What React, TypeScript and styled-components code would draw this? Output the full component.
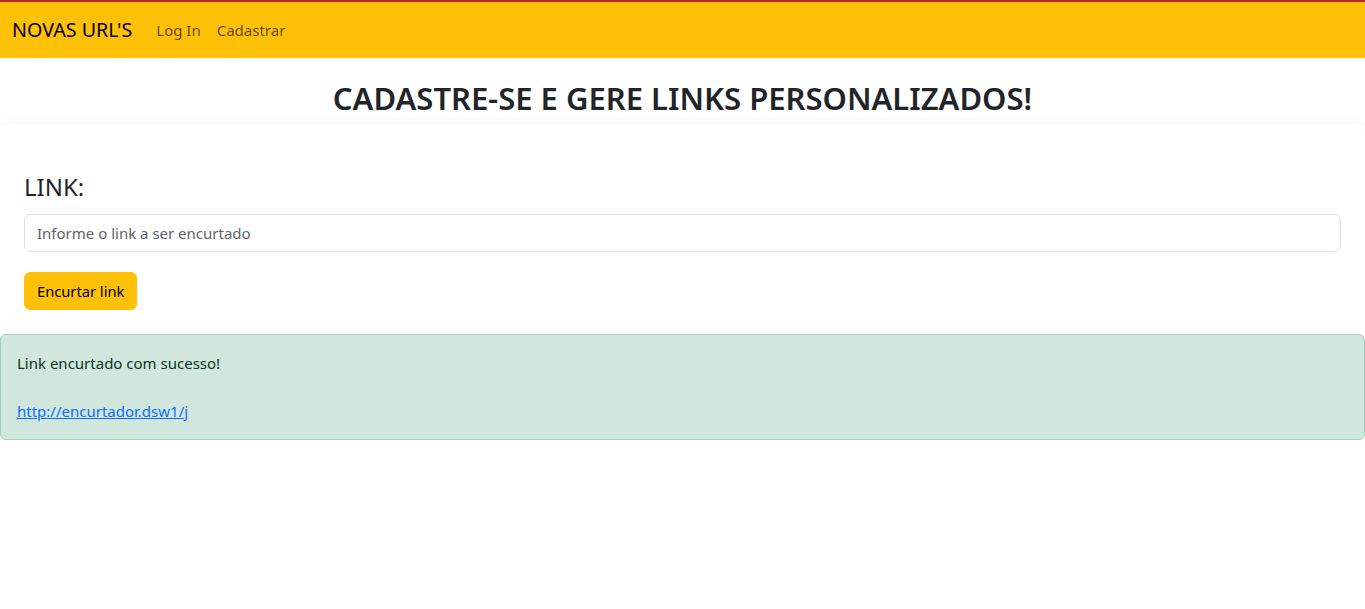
import React from "react";
import styled, { createGlobalStyle } from "styled-components";

const Global = createGlobalStyle`
  * { box-sizing: border-box; }
  body {
    margin: 0;
    font-family: "Noto Sans", "Open Sans", sans-serif;
    font-size: 16px;
    line-height: 1.5;
    color: #212529;
    background: #fff;
  }
`;

const NavBar = styled.nav`
  display: flex;
  align-items: center;
  gap: 16px;
  background: #ffc107;
  border-top: 2px solid #b8262f;
  padding: 8px 12px;
`;

const Brand = styled.a`
  font-size: 19.7px;
  line-height: 30px;
  padding: 5px 0;
  color: #000;
  text-decoration: none;
`;

const NavLinks = styled.div`
  display: flex;
`;

const NavLink = styled.a`
  font-size: 15px;
  color: rgba(0, 0, 0, 0.65);
  text-decoration: none;
  padding: 8px 8px;
`;

const Title = styled.h1`
  margin: 0;
  padding: 21px 0 7px;
  text-align: center;
  font-size: 31px;
  line-height: 38px;
  font-weight: 600;
`;

const Card = styled.section`
  background: #fff;
  border-radius: 8px;
  box-shadow: 0 -2px 10px rgba(0, 0, 0, 0.04);
  padding: 47px 24px 23px;
`;

const Label = styled.label`
  display: block;
  font-size: 24px;
  line-height: 32px;
  margin-bottom: 11px;
`;

const Input = styled.input`
  display: block;
  width: 100%;
  height: 38px;
  padding: 6px 12px;
  font: inherit;
  font-size: 15px;
  color: #212529;
  border: 1px solid #dee2e6;
  border-radius: 6px;
  outline: none;
  &::placeholder { color: #5c636a; }
`;

const Button = styled.button`
  margin-top: 20px;
  height: 38px;
  padding: 6px 12px;
  font: inherit;
  font-size: 14.7px;
  color: #000;
  background: #ffc107;
  border: 1px solid #ffc107;
  border-radius: 6px;
`;

const Alert = styled.div`
  margin-top: 1px;
  padding: 16px;
  background: #d1e7dd;
  border: 1px solid #a3cfbb;
  border-radius: 6px;
  color: #0a3622;
  font-size: 15px;
  line-height: 24px;
`;

const Blank = styled.div`
  height: 24px;
`;

const ResultLink = styled.a`
  color: #0d6efd;
  text-decoration: underline;
`;

export default function App() {
  return (
    <>
      <Global />
      <NavBar>
        <Brand href="#">NOVAS URL'S</Brand>
        <NavLinks>
          <NavLink href="#">Log In</NavLink>
          <NavLink href="#">Cadastrar</NavLink>
        </NavLinks>
      </NavBar>
      <Title>CADASTRE-SE E GERE LINKS PERSONALIZADOS!</Title>
      <Card>
        <Label htmlFor="link">LINK:</Label>
        <Input id="link" placeholder="Informe o link a ser encurtado" />
        <Button>Encurtar link</Button>
      </Card>
      <Alert>
        <div>Link encurtado com sucesso!</div>
        <Blank />
        <ResultLink href="#">http://encurtador.dsw1/j</ResultLink>
      </Alert>
    </>
  );
}
